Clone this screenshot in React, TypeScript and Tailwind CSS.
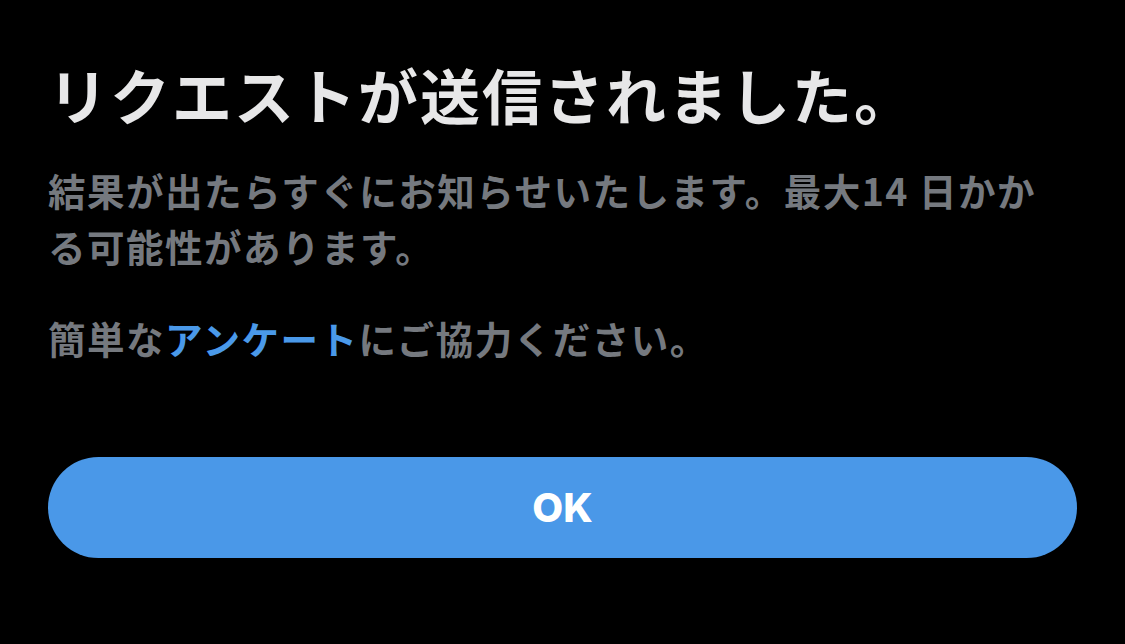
import React from 'react';

export default function App() {
  return (
    <div
      className="w-[1125px] h-[644px] bg-black px-12 flex flex-col overflow-hidden"
      style={{ fontFamily: '"Noto Sans CJK JP", "Noto Sans", sans-serif' }}
    >
      <h1 className="pt-[58px] text-[60px] leading-[72px] font-bold text-[#e7e7e8] tracking-[2px]">
        リクエストが送信されました。
      </h1>

      <p className="mt-[32px] text-[37.5px] leading-[56px] font-semibold text-[#75797f] tracking-[1.5px] pr-[30px]">
        結果が出たらすぐにお知らせいたします。最大14 日かかる可能性があります。
      </p>

      <p className="mt-[36px] text-[37.5px] leading-[56px] font-semibold text-[#75797f] tracking-[1.5px]">
        簡単な<a href="#" className="text-[#4a99e9]">アンケート</a>にご協力ください。
      </p>

      <button className="mt-[91px] h-[101px] w-full rounded-full bg-[#4a98e8] text-white text-[40px] font-extrabold"
        style={{ fontFamily: 'Inter, "Liberation Sans", sans-serif' }}>
        OK
      </button>
    </div>
  );
}
